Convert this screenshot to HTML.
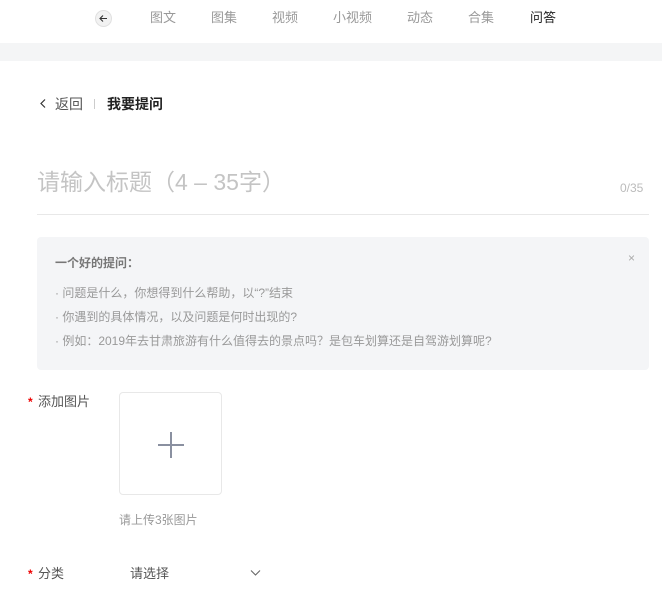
<!DOCTYPE html>
<html><head><meta charset="utf-8"><style>
*{margin:0;padding:0;box-sizing:border-box}
body{width:662px;height:593px;overflow:hidden;background:#fff;font-family:"Liberation Sans","Noto Sans CJK SC",sans-serif;position:relative;color:#333}
.a{position:absolute;white-space:nowrap}
.nav{font-size:13px;color:#999;top:9px;line-height:18px}
</style></head><body>
<div class="a" style="left:0;top:43px;width:662px;height:18px;background:#f4f5f6"></div>
<div class="a" style="left:95px;top:10px;width:17px;height:17px;border-radius:50%;background:#f2f2f2;border:1px solid #e0e0e0"></div>
<svg class="a" style="left:98px;top:13px" width="11" height="11" viewBox="0 0 11 11"><path d="M9 5.5H2M5 2.5L2 5.5L5 8.5" stroke="#333" stroke-width="1.1" fill="none"/></svg>
<div class="a nav" style="left:150px">图文</div>
<div class="a nav" style="left:211px">图集</div>
<div class="a nav" style="left:272px">视频</div>
<div class="a nav" style="left:333px">小视频</div>
<div class="a nav" style="left:407px">动态</div>
<div class="a nav" style="left:468px">合集</div>
<div class="a nav" style="left:530px;color:#222">问答</div>

<svg class="a" style="left:39px;top:98px" width="8" height="12" viewBox="0 0 8 12"><path d="M6 1.5L2 5.5L6 9.5" stroke="#333" stroke-width="1.2" fill="none"/></svg>
<div class="a" style="left:55px;top:95px;font-size:14px;line-height:19px;color:#555">返回</div>
<div class="a" style="left:94px;top:99px;width:1px;height:10px;background:#ccc"></div>
<div class="a" style="left:107px;top:95px;font-size:14px;line-height:19px;color:#222;font-weight:bold">我要提问</div>

<div class="a" style="left:37px;top:167px;font-size:23px;line-height:30px;color:#c4c4c4">请输入标题（4 – 35字）</div>
<div class="a" style="left:620px;top:180px;font-size:12px;line-height:16px;color:#bbb">0/35</div>
<div class="a" style="left:37px;top:214px;width:612px;height:1px;background:#e8e8e8"></div>

<div class="a" style="left:37px;top:237px;width:612px;height:133px;background:#f4f5f7;border-radius:4px"></div>
<div class="a" style="left:55px;top:255px;font-size:12px;line-height:16px;color:#777;font-weight:bold">一个好的提问：</div>
<div class="a" style="left:628px;top:251px;font-size:12px;color:#aaa">×</div>
<div class="a" style="left:55px;top:285px;font-size:12px;line-height:16px;color:#999">· 问题是什么，你想得到什么帮助，以“?”结束</div>
<div class="a" style="left:55px;top:309px;font-size:12px;line-height:16px;color:#999">· 你遇到的具体情况，以及问题是何时出现的?</div>
<div class="a" style="left:55px;top:333px;font-size:12px;line-height:16px;color:#999">· 例如：2019年去甘肃旅游有什么值得去的景点吗？是包车划算还是自驾游划算呢?</div>

<div class="a" style="left:28px;top:396px;font-size:12px;line-height:12px;color:#e00;font-weight:bold">*</div>
<div class="a" style="left:38px;top:393px;font-size:13px;line-height:17px;color:#555">添加图片</div>
<div class="a" style="left:119px;top:392px;width:103px;height:103px;border:1px solid #e8e8e8;border-radius:4px"></div>
<div class="a" style="left:158px;top:444px;width:26px;height:1.5px;background:#8a90a0"></div>
<div class="a" style="left:170px;top:432px;width:1.5px;height:26px;background:#8a90a0"></div>
<div class="a" style="left:119px;top:512px;font-size:12px;line-height:16px;color:#999">请上传3张图片</div>

<div class="a" style="left:28px;top:568px;font-size:12px;line-height:12px;color:#e00;font-weight:bold">*</div>
<div class="a" style="left:38px;top:565px;font-size:13px;line-height:17px;color:#555">分类</div>
<div class="a" style="left:130px;top:565px;font-size:13px;line-height:17px;color:#555">请选择</div>
<svg class="a" style="left:250px;top:569px" width="11" height="8" viewBox="0 0 11 8"><path d="M1 1.5L5.5 6L10 1.5" stroke="#666" stroke-width="1.1" fill="none"/></svg>
</body></html>
